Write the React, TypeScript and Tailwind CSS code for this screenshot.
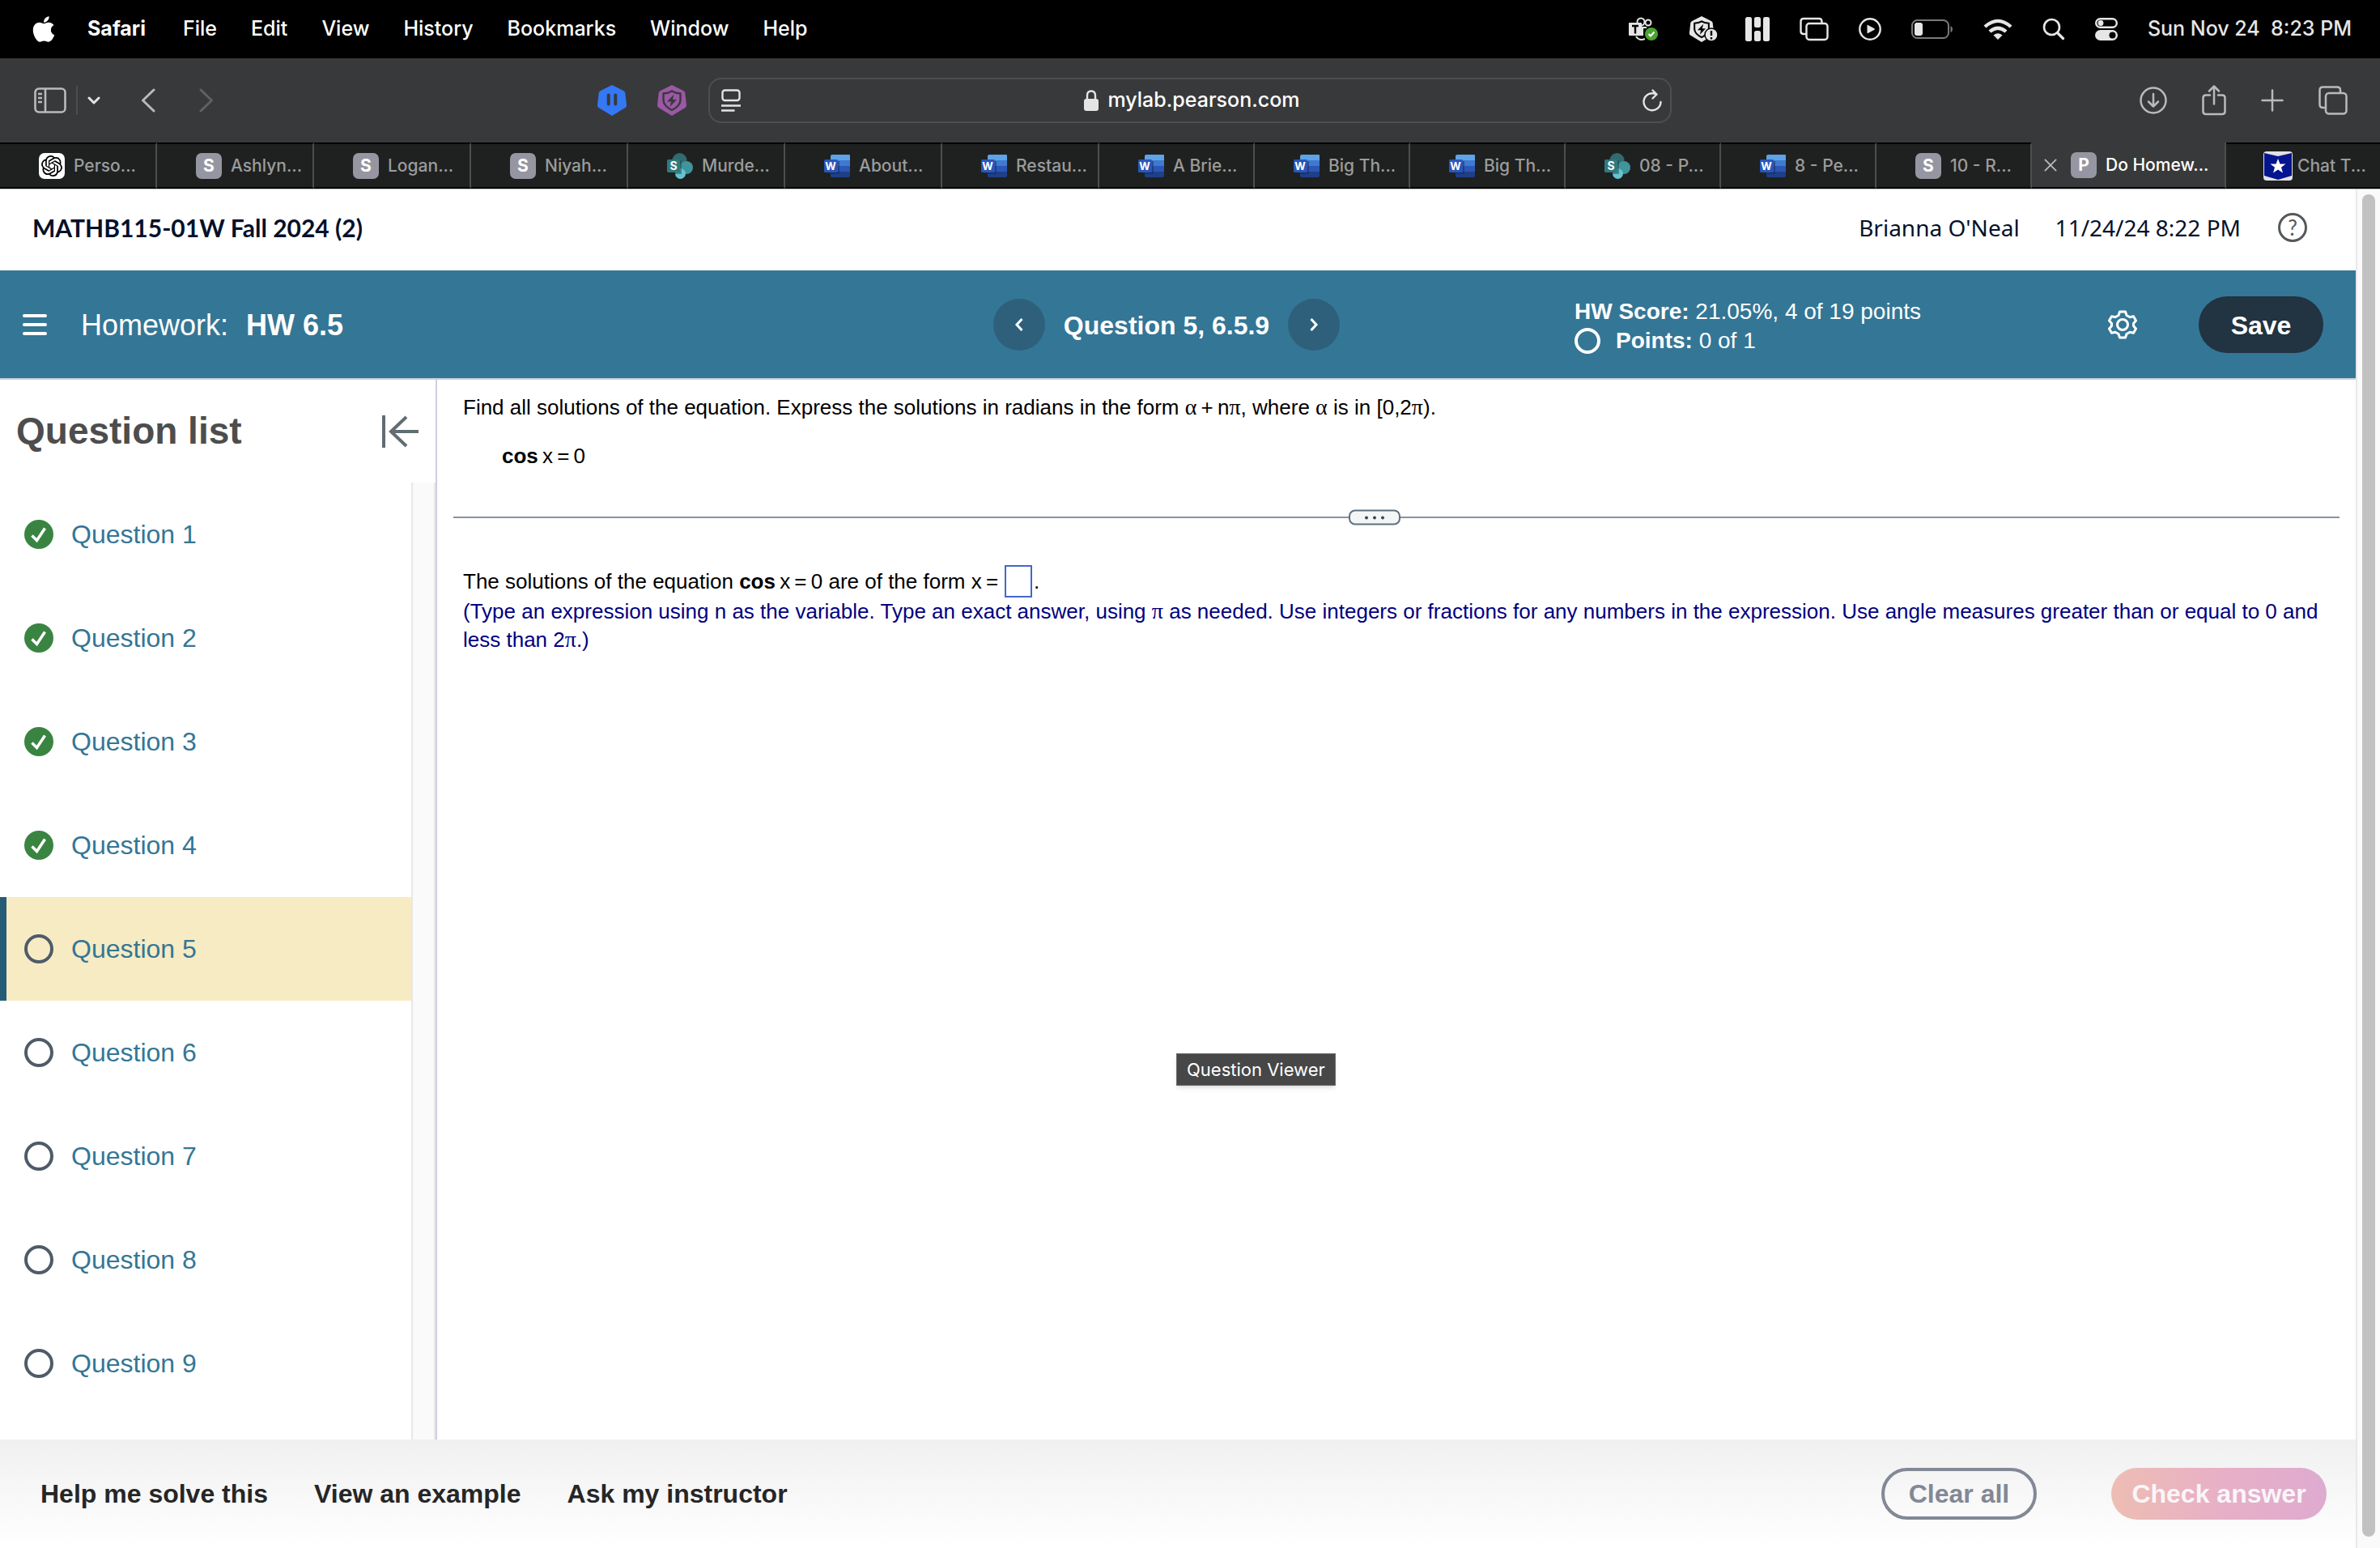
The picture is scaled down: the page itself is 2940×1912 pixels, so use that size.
import React from "react";
import { FaApple } from "react-icons/fa";
import { SiOpenai } from "react-icons/si";

type tabType = {
  kind: "openai" | "letter" | "sharepoint" | "word" | "star";
  letter?: string;
  title: string;
  active?: boolean;
};

const menus = ["File", "Edit", "View", "History", "Bookmarks", "Window", "Help"];

const tabs: tabType[] = [
  { kind: "openai", title: "Perso..." },
  { kind: "letter", letter: "S", title: "Ashlyn..." },
  { kind: "letter", letter: "S", title: "Logan..." },
  { kind: "letter", letter: "S", title: "Niyah..." },
  { kind: "sharepoint", title: "Murde..." },
  { kind: "word", title: "About..." },
  { kind: "word", title: "Restau..." },
  { kind: "word", title: "A Brie..." },
  { kind: "word", title: "Big Th..." },
  { kind: "word", title: "Big Th..." },
  { kind: "sharepoint", title: "08 - P..." },
  { kind: "word", title: "8 - Pe..." },
  { kind: "letter", letter: "S", title: "10 - R..." },
  { kind: "letter", letter: "P", title: "Do Homew...", active: true },
  { kind: "star", title: "Chat T..." },
];

const questions = [1, 2, 3, 4, 5, 6, 7, 8, 9].map((n) => ({
  id: n,
  done: n < 5,
  current: n === 5,
}));

function HexShield(props: { className: string; hole: string }) {
  return (
    <svg viewBox="0 0 36 38" className={props.className} aria-hidden="true">
      <path d="M18 0 32 7Q34 8 34.300 10L36 25Q36 27 34.500 28L18 38 1.500 28Q0 27 0 25L1.700 10Q2 8 4 7Z" fill="currentColor" />
      <path d="M18 7.500Q22 10 28.500 10.500V19Q28 26 18 31 8 26 7.500 19V10.500Q14 10 18 7.500Z" fill="none" stroke={props.hole} strokeWidth="2.400" />
      <path d="M20.500 11.500 12 20.500H17L15.500 27 24 18H19Z" fill={props.hole} />
    </svg>
  );
}

function StatusIcons() {
  return (
    <>
      <svg viewBox="0 0 36 30" className="h-[30px] w-9" aria-hidden="true">
        <g fill="none" stroke="#e6e6e6" strokeWidth="2">
          <circle cx="15" cy="6" r="4.500" />
          <circle cx="24" cy="7" r="3.500" />
          <path d="M9 24Q13 30 20 27" />
        </g>
        <path d="M16 12H22V14H18V23H10V20H16Z" fill="#e6e6e6" />
        <rect x="0" y="7" width="16" height="16" rx="1" fill="#e6e6e6" />
        <path d="M4 11H12M8 11V20.500" stroke="#000" strokeWidth="2.400" />
        <circle cx="28" cy="21" r="8" fill="#4aa52e" />
        <path d="M24.500 21 27 23.500 31.500 18.500" fill="none" stroke="#fff" strokeWidth="2" />
      </svg>
      <span className="relative">
        <HexShield className="h-8 w-[34px] text-[#e6e6e6]" hole="#000" />
        <svg viewBox="0 0 18 18" className="absolute -right-1 bottom-0 size-[18px]" aria-hidden="true">
          <circle cx="9" cy="9" r="8" fill="#e6e6e6" stroke="#000" strokeWidth="1.500" />
          <path d="M9 4V10M9 12V14.500" stroke="#000" strokeWidth="2.400" />
        </svg>
      </span>
      <svg viewBox="0 0 30 30" className="size-[30px]" fill="#e6e6e6" aria-hidden="true">
        <rect width="8" height="30" rx="2.500" />
        <rect x="11" width="8" height="13" rx="2.500" />
        <rect x="11" y="17" width="8" height="13" rx="2.500" />
        <rect x="22" width="8" height="30" rx="2.500" />
      </svg>
      <svg viewBox="0 0 36 30" className="h-[30px] w-9" fill="none" stroke="#e6e6e6" strokeWidth="2.400" aria-hidden="true">
        <path d="M8 21H5Q1.500 21 1.500 17.500V5.500Q1.500 2 5 2H24Q27.500 2 27.500 5.500V7" />
        <rect x="8.500" y="8" width="26" height="20" rx="3.500" />
      </svg>
      <svg viewBox="0 0 28 28" className="size-7" aria-hidden="true">
        <circle cx="14" cy="14" r="12.700" fill="none" stroke="#e6e6e6" strokeWidth="2.400" />
        <path d="M10.500 9.500V18.500Q10.500 19.500 11.500 19L19.500 14.700Q20.300 14 19.500 13.300L11.500 9Q10.500 8.500 10.500 9.500Z" fill="#e6e6e6" />
      </svg>
      <svg viewBox="0 0 52 24" className="h-6 w-[52px]" aria-hidden="true">
        <rect x="1" y="1" width="45" height="22" rx="6.500" fill="none" stroke="#7a7a7a" strokeWidth="2" />
        <rect x="4" y="4" width="10" height="16" rx="3" fill="#e6e6e6" />
        <path d="M48.500 8Q51 9 51 12 51 15 48.500 16Z" fill="#7a7a7a" />
      </svg>
      <svg viewBox="0 0 36 26" className="h-[26px] w-9" fill="#e6e6e6" aria-hidden="true">
        <path d="M18 26 12.500 20.500Q18 16 23.500 20.500Z" />
        <path d="M6.500 14.500Q18 4.500 29.500 14.500L26.500 17.500Q18 10.500 9.500 17.500Z" />
        <path d="M.5 8.500Q18-7 35.500 8.500L32.500 11.500Q18-1.500 3.500 11.500Z" />
      </svg>
      <svg viewBox="0 0 28 28" className="size-7" fill="none" stroke="#e6e6e6" strokeLinecap="round" aria-hidden="true">
        <circle cx="11.500" cy="11.500" r="9.500" strokeWidth="2.600" />
        <path d="M18.500 18.500 25.500 25.500" strokeWidth="3.200" />
      </svg>
      <svg viewBox="0 0 28 28" className="size-7" aria-hidden="true">
        <rect x="1.200" y="1.200" width="25.600" height="10.600" rx="5.300" fill="none" stroke="#e6e6e6" strokeWidth="2.400" />
        <circle cx="7" cy="6.500" r="3.400" fill="#e6e6e6" />
        <rect y="15" width="28" height="13" rx="6.500" fill="#e6e6e6" />
        <circle cx="21.500" cy="21.500" r="4" fill="#000" />
      </svg>
    </>
  );
}

function MenuBar() {
  return (
    <nav className="flex h-[72px] items-center bg-black pl-10 pr-[35px] text-[25px] text-white">
      <FaApple className="h-9 w-7" />
      <div className="ml-10 flex items-center gap-[42px]">
        <button className="mr-1 font-bold">Safari</button>
        {menus.map((menu) => (
          <button key={menu} className="font-medium">
            {menu}
          </button>
        ))}
      </div>
      <div className="ml-auto flex items-center gap-[37px]">
        <StatusIcons />
        <span className="whitespace-pre font-medium text-[#e6e6e6]">Sun Nov 24  8:23 PM</span>
      </div>
    </nav>
  );
}

function Toolbar() {
  return (
    <div className="flex h-[104px] items-center bg-[#38393b] px-10 text-[#b9babb]">
      <div className="flex flex-1 items-center">
        <button className="ml-0.5" aria-label="Sidebar">
          <svg viewBox="0 0 40 32" className="h-8 w-10" fill="none" stroke="currentColor" strokeWidth="2.600">
            <rect x="1.500" y="1.500" width="37" height="29" rx="4.500" />
            <path d="M14 2V30M5 8H10M5 13H10M5 18H10" />
          </svg>
        </button>
        <span className="ml-3 h-9 w-0.5 bg-[#4c4d4f]" />
        <button className="ml-3" aria-label="Tab groups">
          <svg viewBox="0 0 16 10" className="h-2.5 w-4" fill="none" stroke="#e4e4e4" strokeWidth="3" strokeLinecap="round" strokeLinejoin="round">
            <path d="M2 2 8 8 14 2" />
          </svg>
        </button>
        <button className="ml-[50px]" aria-label="Back">
          <svg viewBox="0 0 18 30" className="h-[30px] w-[18px]" fill="none" stroke="currentColor" strokeWidth="3" strokeLinecap="round" strokeLinejoin="round">
            <path d="M16 2 2.500 15 16 28" />
          </svg>
        </button>
        <button className="ml-[54px] text-[#606163]" aria-label="Forward">
          <svg viewBox="0 0 18 30" className="h-[30px] w-[18px]" fill="none" stroke="currentColor" strokeWidth="3" strokeLinecap="round" strokeLinejoin="round">
            <path d="M2 2 15.500 15 2 28" />
          </svg>
        </button>
        <button className="ml-auto" aria-label="Pause extension">
          <svg viewBox="0 0 36 38" className="h-[38px] w-9">
            <path d="M18 0 32 7Q34 8 34.300 10L36 25Q36 27 34.500 28L18 38 1.500 28Q0 27 0 25L1.700 10Q2 8 4 7Z" fill="#3478f6" />
            <path d="M13.700 12.500V23.500M22.300 12.500V23.500" stroke="#38393b" strokeWidth="4" strokeLinecap="round" />
          </svg>
        </button>
        <button className="ml-[38px] mr-[27px]" aria-label="Shield extension">
          <HexShield className="h-[38px] w-9 text-[#9b58a5]" hole="#38393b" />
        </button>
      </div>
      <div className="flex h-14 w-[1190px] items-center rounded-[16px] border-2 border-[#4e4f51] pl-3.5 pr-2.5 text-[25px] text-white">
        <button aria-label="Reader">
          <svg viewBox="0 0 24 28" className="h-7 w-6" fill="none" stroke="#e4e4e4" strokeWidth="2.400">
            <rect x="1.500" y="1.500" width="21" height="12.500" rx="3" />
            <path d="M0 20.500H24M0 26.500H16.500" />
          </svg>
        </button>
        <div className="flex flex-1 items-center justify-center gap-3">
          <svg viewBox="0 0 18 26" className="h-[26px] w-[18px]" fill="#e4e4e4" aria-hidden="true">
            <rect y="11" width="18" height="15" rx="3" />
            <path d="M4 12V7Q4 1.500 9 1.500 14 1.500 14 7V12" fill="none" stroke="#e4e4e4" strokeWidth="2.400" />
          </svg>
          <a href="#" className="font-medium">
            mylab.pearson.com
          </a>
        </div>
        <button aria-label="Reload">
          <svg viewBox="0 0 24 28" className="h-7 w-6" fill="none" stroke="#e4e4e4" strokeWidth="2.400" strokeLinecap="round" strokeLinejoin="round">
            <path d="M12.500 1.500 17.500 6.500 12.500 11.500M17 6.500A10.500 10.500 0 1 0 22.500 16" />
          </svg>
        </button>
      </div>
      <div className="flex flex-1 items-center justify-end gap-[43px]">
        <button aria-label="Downloads">
          <svg viewBox="0 0 34 34" className="size-[34px]" fill="none" stroke="currentColor" strokeWidth="2.500" strokeLinecap="round" strokeLinejoin="round">
            <circle cx="17" cy="17" r="15.500" />
            <path d="M17 9V24.500M11 18.500 17 24.500 23 18.500" />
          </svg>
        </button>
        <button aria-label="Share">
          <svg viewBox="0 0 30 38" className="h-[38px] w-[30px]" fill="none" stroke="currentColor" strokeWidth="2.500" strokeLinecap="round" strokeLinejoin="round">
            <path d="M10 12.500H5Q1.500 12.500 1.500 16V32.500Q1.500 36 5 36H25Q28.500 36 28.500 32.500V16Q28.500 12.500 25 12.500H20M15 23.500V2M9 7.500 15 1.500 21 7.500" />
          </svg>
        </button>
        <button aria-label="New tab">
          <svg viewBox="0 0 28 28" className="size-7" fill="none" stroke="currentColor" strokeWidth="2.500" strokeLinecap="round">
            <path d="M14 1.500V26.500M1.500 14H26.500" />
          </svg>
        </button>
        <button aria-label="Tab overview">
          <svg viewBox="0 0 36 36" className="size-9" fill="none" stroke="currentColor" strokeWidth="2.500">
            <path d="M9 27H5.500Q1.500 27 1.500 23V5.500Q1.500 1.500 5.500 1.500H23Q27 1.500 27 5.500V9" />
            <rect x="9" y="9" width="25.500" height="25.500" rx="4" />
          </svg>
        </button>
      </div>
    </div>
  );
}

function Favicon(props: { tab: tabType }) {
  const { kind, letter } = props.tab;
  if (kind === "openai")
    return (
      <span className="flex size-8 flex-none items-center justify-center rounded-[7px] bg-white text-black">
        <SiOpenai className="size-[26px]" />
      </span>
    );
  if (kind === "sharepoint")
    return (
      <svg viewBox="0 0 32 32" className="size-8 flex-none" aria-hidden="true">
        <circle cx="15.500" cy="9" r="9" fill="#2f6b6f" />
        <circle cx="24" cy="18" r="8" fill="#3f959b" />
        <circle cx="16.500" cy="25.500" r="6.500" fill="#64c5d0" />
        <path d="M7 9H18V26H10Z" fill="#1d4a4d" opacity=".5" />
        <rect y="8" width="16" height="16" rx="1.500" fill="#31797c" />
        <text x="8" y="21" textAnchor="middle" fontSize="14" fontWeight="700" fill="#fff">S</text>
      </svg>
    );
  if (kind === "word")
    return (
      <svg viewBox="0 0 32 32" className="size-8 flex-none" aria-hidden="true">
        <path d="M10 2H31Q32 2 32 3V9H8V4Q8 2 10 2Z" fill="#5ea3e8" />
        <path d="M8 9H32V16H8Z" fill="#4179cf" />
        <path d="M8 16H32V23H8Z" fill="#2b57b5" />
        <path d="M8 23H32V28Q32 30 30 30H10Q8 30 8 28Z" fill="#1f3f88" />
        <rect x="4" y="10" width="15" height="16" fill="#12285c" opacity=".5" />
        <rect y="8" width="17" height="16" rx="1.500" fill="#2a56b9" />
        <text x="8" y="21" textAnchor="middle" fontSize="13" fontWeight="700" fill="#fff">W</text>
      </svg>
    );
  if (kind === "star")
    return (
      <svg viewBox="0 0 36 36" className="size-9 flex-none" aria-hidden="true">
        <rect width="36" height="36" rx="4" fill="#e2e2e2" />
        <path d="M1 2 18 6 35 2V30L18 35 1 30Z" fill="#04158f" />
        <path d="M18 9 20.500 15.500H27.500L22 19.700 24 26.500 18 22.400 12 26.500 14 19.700 8.500 15.500H15.500Z" fill="#fff" />
      </svg>
    );
  return (
    <span className="flex size-8 flex-none items-center justify-center rounded-[7px] bg-[#9696a2] text-[21px] font-bold text-white">
      {letter}
    </span>
  );
}

function TabBar() {
  return (
    <div className="grid h-[57px] grid-cols-[repeat(7,194fr)_repeat(6,192fr)_240fr_190fr] bg-[#1f2120] text-[21px] font-medium">
      {tabs.map((tab, i) => (
        <button
          key={i}
          className={`flex min-w-0 items-center gap-[11px] whitespace-nowrap border-r-2 border-b-2 border-b-black ${
            tab.active
              ? "border-r-[#4c4d4f] bg-[#38393b] pl-[15px] text-white"
              : "border-t-2 border-r-[#4c4d4f] border-t-black pl-12 text-[#9b9c9c] last:border-r-0 last:gap-1.5 last:pl-[46px]"
          }`}
        >
          {tab.active && (
            <svg viewBox="0 0 18 18" className="mr-1.5 size-4 flex-none" stroke="#b9babb" strokeWidth="2" aria-hidden="true">
              <path d="M1 1 17 17M17 1 1 17" />
            </svg>
          )}
          <Favicon tab={tab} />
          <span>{tab.title}</span>
        </button>
      ))}
    </div>
  );
}

function CourseHeader() {
  return (
    <header className="flex h-[100px] items-center pb-1.5 pl-10 pr-[60px] font-['Lato',sans-serif] text-[#05112a]">
      <h1 className="flex-1 text-[30px] font-bold">MATHB115-01W Fall 2024 (2)</h1>
      <div className="flex gap-11 font-['Noto_Sans',sans-serif] text-[28px]">
        <span>Brianna O'Neal</span>
        <span>11/24/24 8:22 PM</span>
      </div>
      <button
        aria-label="Help"
        className="ml-[46px] flex size-9 items-center justify-center rounded-full border-3 border-[#55595c] text-[26px] leading-none text-[#55595c]"
      >
        ?
      </button>
    </header>
  );
}

function NavArrow(props: { label: string; path: string }) {
  return (
    <button aria-label={props.label} className="flex size-16 items-center justify-center rounded-full bg-[#2e607b]">
      <svg viewBox="0 0 12 18" className="h-[18px] w-3" fill="none" stroke="#fff" strokeWidth="3">
        <path d={props.path} />
      </svg>
    </button>
  );
}

function HomeworkBar() {
  return (
    <section className="grid h-[135px] grid-cols-[1199fr_428fr_1215fr] items-center border-b-2 border-[#c9cede] bg-[#347696] pl-7 pr-10 text-[32px] text-white">
      <div className="flex items-center">
        <button aria-label="Menu" className="flex w-[30px] flex-col gap-[7px]">
          <span className="h-1 w-full rounded-full bg-white" />
          <span className="h-1 w-full rounded-full bg-white" />
          <span className="h-1 w-full rounded-full bg-white" />
        </button>
        <h2 className="ml-[42px] pt-0.5 text-[36px]">
          Homework: <b className="ml-3">HW 6.5</b>
        </h2>
      </div>
      <div className="flex items-center justify-between font-bold">
        <NavArrow label="Previous question" path="M9.500 2 3 9 9.500 16" />
        <span className="pt-0.5">Question 5, 6.5.9</span>
        <NavArrow label="Next question" path="M2.500 2 9 9 2.500 16" />
      </div>
      <div className="flex items-center pl-[290px]">
        <div className="pt-1 text-[28px] leading-9">
          <p>
            <b>HW Score:</b> 21.05%, 4 of 19 points
          </p>
          <p className="flex items-center">
            <span className="mr-[19px] size-8 rounded-full border-4 border-white" />
            <span>
              <b>Points:</b> 0 of 1
            </span>
          </p>
        </div>
        <button aria-label="Settings" className="ml-auto">
          <svg viewBox="0 0 36 36" className="size-9" fill="none" stroke="#fff" strokeWidth="3" strokeLinejoin="round">
            <path d="M14.500 2H21.500L23 6.500 27 8.700 31.500 7.800 34.500 13 31.500 16.500V19.500L34.500 23 31.500 28.200 27 27.300 23 29.500 21.500 34H14.500L13 29.500 9 27.300 4.500 28.200 1.500 23 4.500 19.500V16.500L1.500 13 4.500 7.800 9 8.700 13 6.500Z" />
            <circle cx="18" cy="18" r="6.500" />
          </svg>
        </button>
        <button className="ml-[76px] h-[70px] w-[154px] rounded-full bg-[#223341] pt-0.5 font-bold">Save</button>
      </div>
    </section>
  );
}

function QuestionList() {
  return (
    <aside className="flex w-[540px] flex-none flex-col border-r-2 border-[#cfcfdf]">
      <div className="flex h-[127px] items-center justify-between px-5">
        <h2 className="text-[46px] font-bold text-[#4d4d4d]">Question list</h2>
        <button aria-label="Collapse question list">
          <svg viewBox="0 0 46 40" className="h-10 w-[46px]" fill="none" stroke="#616d72" strokeWidth="4">
            <path d="M2 0V40M45 20H11M30 2 11 20 30 38" />
          </svg>
        </button>
      </div>
      <div className="flex flex-1">
        <ul className="flex-1">
          {questions.map((q) => (
            <li key={q.id}>
              <a
                href="#"
                className={`flex h-32 items-center gap-[22px] text-[32px] text-[#347696] ${
                  q.current ? "border-l-8 border-[#275c77] bg-[#f7ebc3] pl-[22px]" : "pl-[30px]"
                }`}
              >
                {q.done ? (
                  <svg viewBox="0 0 36 36" className="size-9" aria-hidden="true">
                    <circle cx="18" cy="18" r="18" fill="#3a8442" />
                    <path d="M9.500 19.500 15.500 25.500 25.500 10.500" fill="none" stroke="#fff" strokeWidth="3.500" />
                  </svg>
                ) : (
                  <span className="size-9 rounded-full border-4 border-[#4f5b69]" />
                )}
                Question {q.id}
              </a>
            </li>
          ))}
        </ul>
        <div className="w-[30px] border-x-2 border-[#e8e8e8] bg-[#fafafa]" />
      </div>
    </aside>
  );
}

function Greek(props: { children: React.ReactNode }) {
  return <span className="font-['Liberation_Serif',serif] text-[28px] leading-none">{props.children}</span>;
}

function QuestionViewer() {
  return (
    <main className="relative flex-1 px-5 text-[26px] leading-[35px] text-black">
      <p className="ml-3 pt-[17px]">
        Find all solutions of the equation. Express the solutions in radians in the form <Greek>α</Greek>&#8201;+&#8201;n
        <Greek>π</Greek>, where <Greek>α</Greek> is in [0,2<Greek>π</Greek>).
      </p>
      <p className="ml-[60px] mt-[25px]">
        <b>cos</b>&#8201;x&#8201;=&#8201;0
      </p>
      <div className="relative mt-[57px] h-0.5 bg-[#8593a3]">
        <button
          aria-label="Resize"
          className="absolute left-[49%] top-1/2 -ml-1 flex h-[19px] w-16 -translate-x-1/2 -translate-y-1/2 items-center justify-center gap-1.5 rounded-[8px] border-2 border-[#5f6f7d] bg-[#f3f6f7]"
        >
          <span className="size-1 rounded-full bg-[#444]" />
          <span className="size-1 rounded-full bg-[#444]" />
          <span className="size-1 rounded-full bg-[#444]" />
        </button>
      </div>
      <label className="ml-3 mt-[58px] flex items-center">
        <span>
          The solutions of the equation <b>cos</b>&#8201;x&#8201;=&#8201;0 are of the form x&#8201;=
        </span>
        <input className="ml-2 mr-0.5 h-10 w-[34px] border-2 border-[#4468c8]" />.
      </label>
      <p className="ml-3 text-[#00007f]">
        (Type an expression using n as the variable. Type an exact answer, using <Greek>π</Greek> as needed. Use integers or
        fractions for any numbers in the expression. Use angle measures greater than or equal to 0 and less than 2
        <Greek>π</Greek>.)
      </p>
      <div
        role="tooltip"
        className="absolute left-[913px] top-[832px] flex h-10 items-center border border-[#6a6a6a] bg-[#474747] px-3 font-['Inter',sans-serif] text-[22px] text-white shadow-md"
      >
        Question Viewer
      </div>
    </main>
  );
}

function ActionBar() {
  return (
    <footer className="flex h-[134px] items-center bg-linear-to-b from-[#f0f0f0] to-white pl-[50px] pr-9 text-[32px] font-bold text-[#262626]">
      <div className="flex flex-1 gap-[57px]">
        <button>Help me solve this</button>
        <button>View an example</button>
        <button>Ask my instructor</button>
      </div>
      <button className="h-16 w-48 rounded-full border-4 border-[#828896] text-[#828896]">Clear all</button>
      <button className="ml-[92px] h-16 w-[266px] rounded-full bg-linear-to-r from-[#eebdb3] via-[#e8b0c6] to-[#deabd0] text-[#f9f6f9]">
        Check answer
      </button>
    </footer>
  );
}

export default function App() {
  return (
    <div className="flex min-h-screen flex-col bg-white font-['Liberation_Sans',Arial,sans-serif]">
      <div className="border-b border-[#c4c4c4] font-['Inter',sans-serif]">
        <MenuBar />
        <Toolbar />
        <TabBar />
      </div>
      <div className="flex flex-1">
        <div className="flex min-w-0 flex-1 flex-col">
          <CourseHeader />
          <HomeworkBar />
          <div className="flex flex-1">
            <QuestionList />
            <QuestionViewer />
          </div>
          <ActionBar />
        </div>
        <div className="flex w-[30px] border-l-2 border-[#e8e8e8] bg-[#fafafa] pb-3.5 pl-1.5 pt-1.5">
          <div className="w-4 rounded-full bg-[#c1c1c1]" />
        </div>
      </div>
    </div>
  );
}
